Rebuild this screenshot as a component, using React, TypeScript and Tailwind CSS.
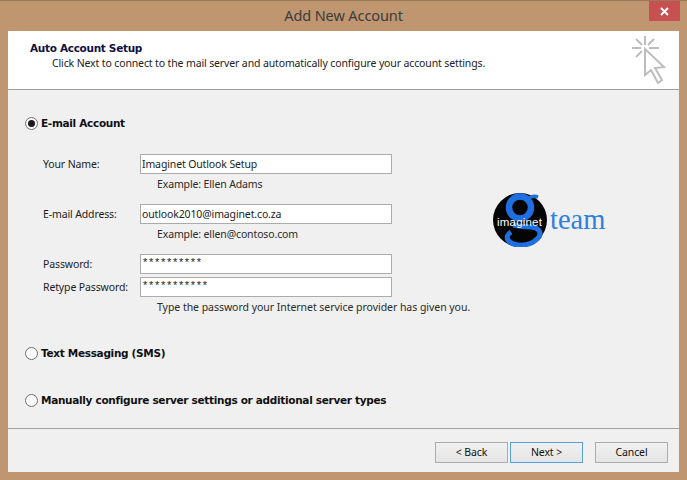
const ui = { fontFamily: '"Noto Sans", sans-serif' };

function Radio({ checked, label }: { checked?: boolean; label: string }) {
  return (
    <div className="flex items-center h-[15px] mb-[1px] pl-[17px] gap-[3px]">
      <span className="w-[13px] h-[13px] rounded-full border border-[#707070] bg-[#fafafa] flex items-center justify-center shrink-0">
        {checked && <span className="w-[7px] h-[7px] rounded-full bg-[#1a1a1a]" />}
      </span>
      <span className="font-bold text-[10.5px] leading-[15px] text-[#101010] font-['DejaVu_Sans'] tracking-[-0.31px] whitespace-nowrap">{label}</span>
    </div>
  );
}

function Field({ label, value, stars, hint, wide }: { label: string; value: string; stars?: boolean; hint?: string; wide?: boolean }) {
  return (
    <div>
      <div className="flex items-center h-[20px]">
        <span className="w-[97px] pt-[1px] text-[10.5px] tracking-[-0.13px] text-[#1c1c1c] whitespace-nowrap">{label}</span>
        <div className={`w-[252px] h-[20px] border border-[#ababab] bg-white flex px-[1px] text-[#222] whitespace-nowrap ${stars ? "items-start text-[11px] leading-[15px] font-['Liberation_Sans'] tracking-[1.7px] pl-[2px]" : "items-center pt-[1px] text-[10.5px] tracking-[-0.13px]"}`}>
          {value}
        </div>
      </div>
      {hint && (
        <div className={`pl-[114px] mt-[3px] h-[15px] leading-[15px] text-[10.5px] text-[#2a2a2a] whitespace-nowrap ${wide ? "tracking-[-0.04px]" : "tracking-[-0.13px]"}`}>
          {hint}
        </div>
      )}
    </div>
  );
}

function Btn({ label, active }: { label: string; active?: boolean }) {
  return (
    <button className={`w-[73px] h-[21px] flex items-center justify-center text-[10.5px] tracking-[-0.1px] text-[#111] border bg-gradient-to-b from-[#f0f0f0] to-[#e5e5e5] ${active ? "border-[#5b9fd8]" : "border-[#acacac]"}`}>
      {label}
    </button>
  );
}

function Logo() {
  return (
    <div className="flex items-center">
      <div className="relative w-[54px] h-[54px]">
        <svg width="54" height="54" viewBox="0 0 54 54">
          <circle cx="27" cy="27" r="27" fill="#050505" />
          <ellipse cx="27" cy="14.5" rx="11" ry="11" fill="none" stroke="#1f6fe0" strokeWidth="6.5" />
          <path d="M35 6 Q39 2 45 4" fill="none" stroke="#1f6fe0" strokeWidth="3.5" />
          <path d="M20 32 Q30 34 38 34 C48 35 49 42 44 46 C36 54 20 54 15 47 C13 44 15 41 18 39" fill="none" stroke="#1f6fe0" strokeWidth="5" />
        </svg>
        <span className="absolute left-[4px] top-[22px] text-[11.5px] leading-[14px] text-white font-['Liberation_Sans'] tracking-[0.2px]">imaginet</span>
      </div>
      <span className="ml-[3px] text-[28.5px] leading-none text-[#2f7fe0] font-['Liberation_Serif']">team</span>
    </div>
  );
}

export default function App() {
  return (
    <div style={ui} className="w-[687px] h-[480px] bg-[#bf9670] border-t border-t-[#9a7858] flex flex-col overflow-hidden">
      <div className="h-[30px] shrink-0 relative flex items-center justify-center">
        <span className="text-[14.5px] tracking-[-0.1px] text-[#3c3c3c]">Add New Account</span>
        <div className="absolute right-[7px] top-0 w-[31px] h-[20px] bg-[#c75050] flex items-center justify-center">
          <svg width="9" height="9" viewBox="0 0 9 9">
            <path d="M1 1 L8 8 M8 1 L1 8" stroke="#fff" strokeWidth="2" />
          </svg>
        </div>
      </div>
      <div className="mx-[8px] w-[671px] h-[441px] bg-[#f0f0f0] flex flex-col">
        <div className="h-[59px] bg-white border-b border-[#a0a0a0] shrink-0 flex justify-between">
          <div className="pl-[22px] pt-[10px]">
            <div className="font-bold text-[10.5px] leading-[15px] text-[#101040] font-['DejaVu_Sans'] tracking-[-0.31px]">Auto Account Setup</div>
            <div className="pl-[22px] text-[10.5px] tracking-[-0.13px] leading-[14px] text-[#222] whitespace-nowrap">
              Click Next to connect to the mail server and automatically configure your account settings.
            </div>
          </div>
          <svg className="mr-[12px] mt-[4px] shrink-0" width="36" height="52" viewBox="0 0 36 52" fill="none">
            <path d="M14 1 V10 M1 13 H10 M5 4 L11 10 M23 4 L17 10 M5 22 L11 16 M18 13 H28" stroke="#bdbdbd" strokeWidth="2" />
            <path d="M14 14 V40 L20 35 L27 48 L31 45 L24 33 L33 32 Z" fill="#fff" stroke="#bdbdbd" strokeWidth="2" />
          </svg>
        </div>
        <div className="flex-1 flex flex-col">
          <div className="pt-[26px]">
            <Radio checked label="E-mail Account" />
          </div>
          <div className="flex mt-[22px]">
            <div className="pl-[35px] w-[485px] shrink-0">
              <Field label="Your Name:" value="Imaginet Outlook Setup" hint="Example: Ellen Adams" />
              <div className="mt-[12px]">
                <Field label="E-mail Address:" value="outlook2010@imaginet.co.za" hint="Example: ellen@contoso.com" />
              </div>
              <div className="mt-[12px]">
                <Field label="Password:" value="**********" stars />
              </div>
              <div className="mt-[3px]">
                <Field label="Retype Password:" value="***********" stars wide hint="Type the password your Internet service provider has given you." />
              </div>
            </div>
            <div className="mt-[39px]">
              <Logo />
            </div>
          </div>
          <div className="mt-[31px]">
            <Radio label="Text Messaging (SMS)" />
          </div>
          <div className="mt-[31px]">
            <Radio label="Manually configure server settings or additional server types" />
          </div>
        </div>
        <div className="h-[44px] border-t border-[#a0a0a0] shrink-0 flex items-start pt-[13px] pl-[427px]">
          <Btn label="< Back" />
          <div className="ml-[2px]"><Btn label="Next >" active /></div>
          <div className="ml-[12px]"><Btn label="Cancel" /></div>
        </div>
      </div>
    </div>
  );
}
